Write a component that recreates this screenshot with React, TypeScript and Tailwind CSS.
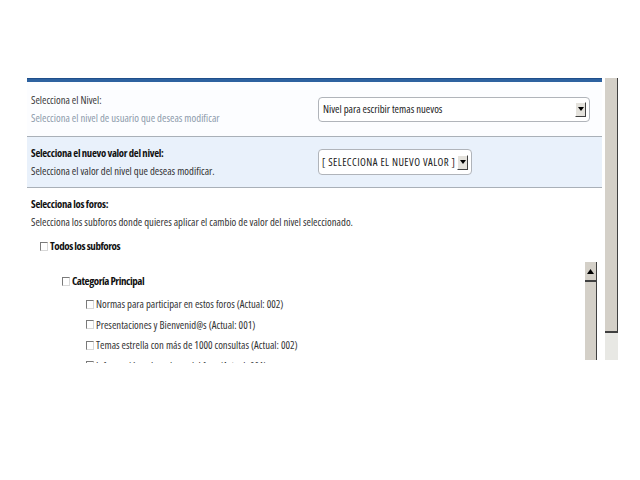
import React from "react";

const font = { fontFamily: '"Open Sans", "Liberation Sans", sans-serif', fontStretch: "condensed" };

function Check() {
  return (
    <span className="inline-block w-[8px] h-[9px] bg-white border-t border-l border-[#7a7a7a] border-r border-b border-r-[#d8d8d8] border-b-[#d8d8d8] mr-[2px] shrink-0" />
  );
}

function DropBtn() {
  return (
    <span className="flex items-center justify-center w-[11px] h-[15px] bg-[#e4e2dc] border border-t-white border-l-white border-r-[#404040] border-b-[#404040] shrink-0">
      <svg width="6" height="4" viewBox="0 0 6 4"><path d="M0 0h6L3 4z" fill="#000" /></svg>
    </span>
  );
}

export default function App() {
  return (
    <div className="w-[640px] h-[480px] bg-white relative overflow-hidden" style={font}>
      <div className="flex items-start mt-[78px] h-[285px] overflow-hidden">
        <div className="ml-[27px] w-[575px] h-[285px] flex flex-col overflow-hidden">
          <div className="h-[4px] shrink-0 bg-[#2d62a0] border-t border-[#1f4f8a]" />
          {/* Section 1 */}
          <div className="h-[55px] shrink-0 bg-[#fcfdff] border-b border-[#a9b0b8] flex items-center justify-between pl-[4px] pr-[12px]">
            <div className="flex flex-col text-[10.7px] leading-[18px]">
              <span className="text-[#3a3a3a]">Selecciona el Nivel:</span>
              <span className="text-[#8d9bab]">Selecciona el nivel de usuario que deseas modificar</span>
            </div>
            <div className="w-[272px] h-[25px] rounded-[4px] border border-[#b0b4ba] bg-white flex items-center justify-between pl-[4px] pr-[3px]">
              <span className="text-[10.7px] text-[#222]">Nivel para escribir temas nuevos</span>
              <DropBtn />
            </div>
          </div>
          {/* Section 2 */}
          <div className="h-[51px] shrink-0 bg-[#e9f1fb] border-b border-[#a9b0b8] flex items-center pl-[4px]">
            <div className="flex flex-col text-[10.7px] leading-[18px] w-[287px]">
              <span className="text-[#111] font-bold tracking-[-0.3px]">Selecciona el nuevo valor del nivel:</span>
              <span className="text-[#333]">Selecciona el valor del nivel que deseas modificar.</span>
            </div>
            <div className="h-[26px] rounded-[4px] border border-[#b0b4ba] bg-white flex items-center pl-[3px] pr-[3px] gap-[2px]">
              <span className="text-[10.7px] text-[#222] tracking-[0.45px]">[ SELECCIONA EL NUEVO VALOR ]</span>
              <DropBtn />
            </div>
          </div>
          {/* Section 3 */}
          <div className="flex flex-col shrink-0 pl-[4px] pt-[7px] text-[10.7px] relative h-[200px]">
            <span className="text-[#111] font-bold leading-[18px] tracking-[-0.3px]">Selecciona los foros:</span>
            <span className="text-[#333] leading-[18px]">Selecciona los subforos donde quieres aplicar el cambio de valor del nivel seleccionado.</span>
            <div className="flex items-center pl-[9px] mt-[5px] h-[20px] font-bold text-[11px] tracking-[-0.45px] text-[#111]">
              <Check />
              <span>Todos los subforos</span>
            </div>
            <div className="flex items-center pl-[31px] mt-[15px] h-[20px] font-bold text-[11px] tracking-[-0.45px] text-[#111]">
              <Check />
              <span>Categoría Principal</span>
            </div>
            <div className="flex flex-col pl-[55px] mt-[3px] text-[#333]">
              {[
                "Normas para participar en estos foros (Actual: 002)",
                "Presentaciones y Bienvenid@s (Actual: 001)",
                "Temas estrella con más de 1000 consultas (Actual: 002)",
                "Información sobre el uso del foro (Actual: 001)",
              ].map((t) => (
                <div key={t} className="flex items-center h-[20.5px]">
                  <Check />
                  <span>{t}</span>
                </div>
              ))}
            </div>
            {/* inner scrollbar */}
            <div className="absolute left-[558px] top-[74px] w-[12px] h-[98px] bg-[#d4d0c8] border-r border-[#404040] flex flex-col">
              <div className="h-[20px] border-b-2 border-[#404040] flex items-center justify-center">
                <svg width="7" height="5" viewBox="0 0 7 5"><path d="M0 5h7L3.5 0z" fill="#000" /></svg>
              </div>
            </div>
          </div>
        </div>
        {/* outer scrollbar */}
        <div className="ml-[3px] w-[13px] h-[282px] flex flex-col">
          <div className="h-[255px] shrink-0 bg-[#d4d0c8] border-r border-[#404040] border-b-2 border-b-[#404040]" />
          <div className="flex-1 bg-[#e8e8e4]" />
        </div>
      </div>
    </div>
  );
}
